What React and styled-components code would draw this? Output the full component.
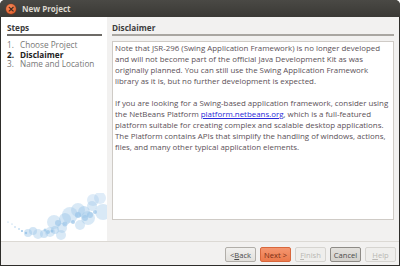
import styled, { createGlobalStyle } from "styled-components";

const GlobalStyle = createGlobalStyle`
    html, body {
        margin: 0;
        padding: 0;
        background: #fff;
    }
    body {
        font-family: "Open Sans", "Noto Sans", sans-serif;
    }
`;

const steps = [
    { n: "1.", label: "Choose Project" },
    { n: "2.", label: "Disclaimer", current: true },
    { n: "3.", label: "Name and Location" },
];

const bubbles = [
    [7, 29, 0.6, 0.8], [11, 31, 0.6, 0.8], [14, 34, 0.7, 0.8], [18, 36, 0.8, 0.8],
    [21, 38, 1, 0.8], [25, 40, 1.2, 0.7],
    [27, 40, 4, 0.35], [32, 38, 4, 0.35], [37, 41, 5, 0.3], [43, 41, 4, 0.35],
    [49, 39, 5, 0.3], [54, 37, 4, 0.35], [47, 39, 2, 0.6], [51, 38, 1.5, 0.7],
    [53, 29, 7, 0.3], [61, 35, 5, 0.3], [64, 26, 6, 0.35], [69, 22, 8, 0.3],
    [77, 17, 7, 0.3], [83, 19, 6, 0.35], [87, 25, 7, 0.3], [91, 13, 5, 0.3],
    [92, 7, 6, 0.25], [99, 5, 6, 0.25], [102, 19, 8, 0.3], [79, 32, 5, 0.3], [60, 42, 5, 0.3],
    [57, 30, 3, 0.5], [64, 31, 2.5, 0.5], [77, 22, 3, 0.55], [84, 25, 3, 0.5],
    [89, 22, 3, 0.5], [94, 19, 2, 0.55], [72, 29, 2, 0.55], [44, 37, 1.5, 0.6],
];

export default function App() {
    return (
        <>
            <GlobalStyle />
            <SWindow>
                <STitleBar>
                    <SClose>×</SClose>
                    <STitle>New Project</STitle>
                </STitleBar>
                <SFrame>
                    <SBody>
                        <SSteps>
                            <SHeading>Steps</SHeading>
                            <SStepList>
                                {steps.map((s) => (
                                    <SStep key={s.n} $current={s.current}>
                                        <SStepNum>{s.n}</SStepNum>
                                        {s.label}
                                    </SStep>
                                ))}
                            </SStepList>
                            <SBubbles width="106" height="48" viewBox="0 0 106 48">
                                {bubbles.map(([cx, cy, r, o], i) => (
                                    <circle key={i} cx={cx} cy={cy} r={r} fill="#9cc6e8" fillOpacity={Math.min(1, o * 1.3)} />
                                ))}
                            </SBubbles>
                        </SSteps>
                        <SContent>
                            <SHeading $wide>Disclaimer</SHeading>
                            <STextBox>
                                <SPara>
                                    Note that JSR-296 (Swing Application Framework) is no longer developed<br />
                                    and will not become part of the official Java Development Kit as was<br />
                                    originally planned. You can still use the Swing Application Framework<br />
                                    library as it is, but no further development is expected.
                                </SPara>
                                <SPara>
                                    If you are looking for a Swing-based application framework, consider using<br />
                                    the NetBeans Platform <SLink>platform.netbeans.org</SLink>, which is a full-featured<br />
                                    platform suitable for creating complex and scalable desktop applications.<br />
                                    The Platform contains APIs that simplify the handling of windows, actions,<br />
                                    files, and many other typical application elements.
                                </SPara>
                            </STextBox>
                        </SContent>
                    </SBody>
                    <SButtonBar>
                        <SButton>&lt;<u>B</u>ack</SButton>
                        <SButton $primary>Next &gt;</SButton>
                        <SButton disabled><u>F</u>inish</SButton>
                        <SButton $focused>Cancel</SButton>
                        <SButton disabled><u>H</u>elp</SButton>
                    </SButtonBar>
                </SFrame>
            </SWindow>
        </>
    );
}

const SWindow = styled.div`
    width: 400px;
    height: 266px;
    display: flex;
    flex-direction: column;
    background: #3c3b37;
    border-radius: 5px 5px 0 0;
    overflow: hidden;
`;

const STitleBar = styled.div`
    height: 17px;
    flex: none;
    display: flex;
    align-items: center;
    padding-left: 6px;
    background: linear-gradient(#4a4945, #3a3935);
`;

const SClose = styled.div`
    width: 10px;
    height: 10px;
    border-radius: 50%;
    background: radial-gradient(circle at 40% 35%, #f58b5e, #e0541f);
    box-shadow: 0 0 0 0.5px #8a3a18;
    color: #3b2418;
    font: bold 9px/10px "DejaVu Sans", sans-serif;
    text-align: center;
`;

const STitle = styled.div`
    margin-left: 6px;
    color: #dcd8cf;
    font-weight: bold;
    font-size: 8px;
`;

const SFrame = styled.div`
    flex: 1;
    display: flex;
    flex-direction: column;
    background: #f2f1f0;
    border: 1px solid #2e2d2a;
    border-top: none;
`;

const SBody = styled.div`
    height: 224px;
    display: flex;
    border-bottom: 1px solid #dcd9d4;
`;

const SSteps = styled.div`
    width: 106px;
    box-sizing: border-box;
    background: #fff;
    display: flex;
    flex-direction: column;
    padding: 0 5px 0 6px;
    overflow: hidden;
`;

const SHeading = styled.div`
    margin-top: 6px;
    padding-bottom: 1px;
    font-size: 8.2px;
    line-height: 10px;
    font-weight: bold;
    color: #3c3c3c;
    border-bottom: 2px solid ${(p) => (p.$wide ? "#a9a6a1" : "#6d6b67")};
`;

const SStepList = styled.div`
    margin-top: 4px;
    display: flex;
    flex-direction: column;
`;

const SStep = styled.div`
    display: flex;
    font-size: 8.2px;
    line-height: 9.5px;
    color: ${(p) => (p.$current ? "#222" : "#777")};
    font-weight: ${(p) => (p.$current ? "bold" : "normal")};
`;

const SStepNum = styled.span`
    width: 13px;
`;

const SBubbles = styled.svg`
    margin-top: auto;
    margin-left: -6px;
    flex: none;
`;

const SContent = styled.div`
    flex: 1;
    display: flex;
    flex-direction: column;
    padding: 0 5px 21px 5px;
`;

const STextBox = styled.div`
    flex: 1;
    margin-top: 5px;
    background: #fff;
    border: 1px solid #cfcbc6;
    padding: 1px 2px;
`;

const SPara = styled.p`
    margin: 0 0 11px 0;
    font-size: 7.9px;
    line-height: 11px;
    color: #5b5157;
    white-space: nowrap;
`;

const SLink = styled.span`
    color: #2a2ad8;
    text-decoration: underline;
`;

const SButtonBar = styled.div`
    flex: 1;
    display: flex;
    justify-content: flex-end;
    align-items: flex-start;
    gap: 4px;
    padding: 5px 3px 0 0;
`;

const SButton = styled.button`
    width: 31px;
    height: 15px;
    padding: 0;
    box-sizing: border-box;
    font-family: "Open Sans", "Noto Sans", sans-serif;
    font-size: 7.6px;
    border-radius: 2px;
    border: 1px solid ${(p) => (p.$primary ? "#d8673c" : p.$focused ? "#8e8b86" : "#b1aea9")};
    background: ${(p) =>
        p.$primary
            ? "linear-gradient(#f49670, #ec7a4c)"
            : p.$focused
            ? "linear-gradient(#e2e0dc, #d3d1cc)"
            : "linear-gradient(#f1f0ee, #e2e0dc)"};
    color: ${(p) => (p.$primary ? "#7a2e14" : "#4a4a4a")};
    &:disabled {
        color: #b9b7b3;
        border-color: #d6d4d0;
        background: #efeeec;
    }
    u {
        text-decoration: underline;
    }
`;
